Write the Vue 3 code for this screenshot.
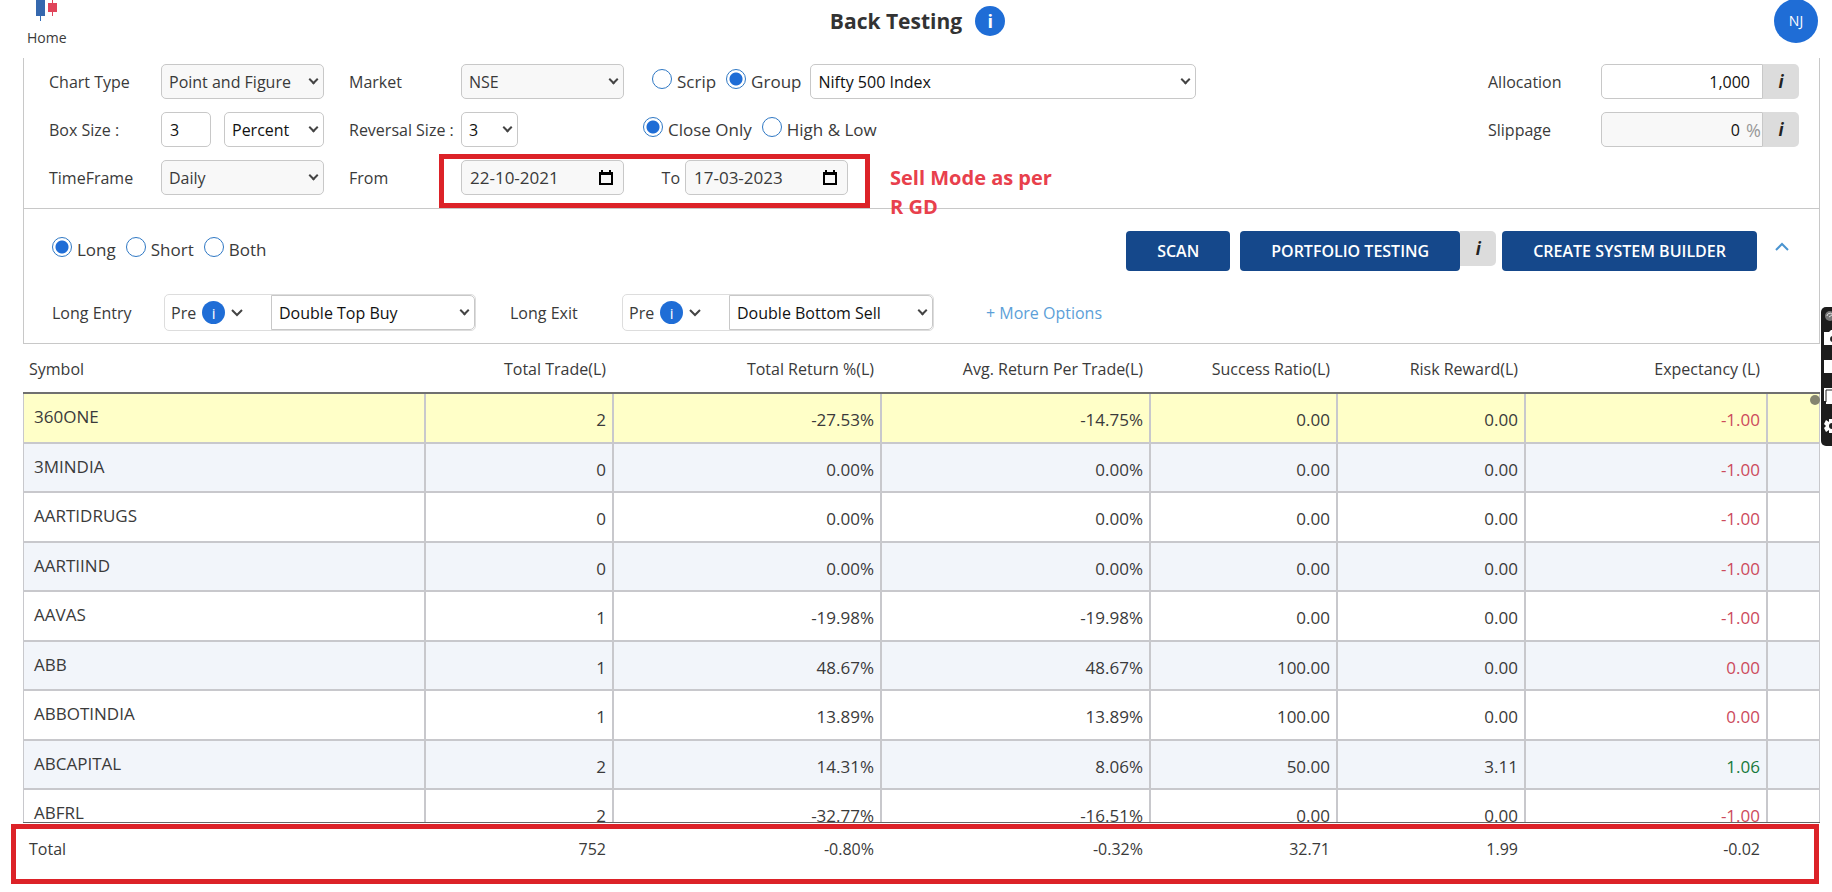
<script setup>
import { ref } from 'vue'

const chartType = ref('Point and Figure')
const market = ref('NSE')
const scope = ref('group')
const group = ref('Nifty 500 Index')
const boxSize = ref('3')
const boxUnit = ref('Percent')
const reversal = ref('3')
const priceMode = ref('close')
const timeFrame = ref('Daily')
const fromDate = ref('22-10-2021')
const toDate = ref('17-03-2023')
const allocation = ref('1,000')
const slippage = ref('0')
const side = ref('long')

const conditions = ref([
  { id: 'entry', label: 'Long Entry', value: 'Double Top Buy' },
  { id: 'exit', label: 'Long Exit', value: 'Double Bottom Sell' },
])

const headings = [
  'Symbol', 'Total Trade(L)', 'Total Return %(L)', 'Avg. Return Per Trade(L)',
  'Success Ratio(L)', 'Risk Reward(L)', 'Expectancy (L)',
]

const rows = [
  ['360ONE', '2', '-27.53%', '-14.75%', '0.00', '0.00', '-1.00'],
  ['3MINDIA', '0', '0.00%', '0.00%', '0.00', '0.00', '-1.00'],
  ['AARTIDRUGS', '0', '0.00%', '0.00%', '0.00', '0.00', '-1.00'],
  ['AARTIIND', '0', '0.00%', '0.00%', '0.00', '0.00', '-1.00'],
  ['AAVAS', '1', '-19.98%', '-19.98%', '0.00', '0.00', '-1.00'],
  ['ABB', '1', '48.67%', '48.67%', '100.00', '0.00', '0.00'],
  ['ABBOTINDIA', '1', '13.89%', '13.89%', '100.00', '0.00', '0.00'],
  ['ABCAPITAL', '2', '14.31%', '8.06%', '50.00', '3.11', '1.06'],
  ['ABFRL', '2', '-32.77%', '-16.51%', '0.00', '0.00', '-1.00'],
]

const totals = ['Total', '752', '-0.80%', '-0.32%', '32.71', '1.99', '-0.02']

function tone(value, column) {
  if (column !== 6) return ''
  return parseFloat(value) > 0 ? 'gain' : 'loss'
}
</script>

<template>
  <div class="page">
    <header class="top">
      <a class="home" href="#">
        <svg width="21" height="22" viewBox="0 0 21 22" aria-hidden="true">
          <path d="M4.5 0V21" stroke="#2f6cb8" stroke-width="1" />
          <rect x="0" y="0" width="9" height="16" fill="#3568ae" />
          <path d="M16.500 0V16" stroke="#e0445a" stroke-width="1" />
          <rect x="12" y="3" width="9" height="9" fill="#e0445a" />
        </svg>
        <span>Home</span>
      </a>
      <h1>Back Testing <button class="dot big" type="button" aria-label="About back testing">i</button></h1>
      <button class="avatar" type="button">NJ</button>
    </header>

    <section class="panel">
      <div class="settings">
        <div class="line">
          <label class="name" for="chart">Chart Type</label>
          <div class="pick muted w163"><select id="chart" v-model="chartType"><option>Point and Figure</option></select></div>
          <label class="name second" for="market">Market</label>
          <div class="pick muted w163"><select id="market" v-model="market"><option>NSE</option></select></div>
          <div class="radios scope">
            <label><input v-model="scope" type="radio" name="scope" value="scrip">Scrip</label>
            <label><input v-model="scope" type="radio" name="scope" value="group">Group</label>
          </div>
          <div class="pick wide"><select v-model="group" aria-label="Group"><option>Nifty 500 Index</option></select></div>
          <div class="money">
            <label for="alloc">Allocation</label>
            <input id="alloc" v-model="allocation" class="box" type="text">
            <button class="info" type="button" aria-label="About allocation">i</button>
          </div>
        </div>

        <div class="line">
          <label class="name" for="size">Box Size :</label>
          <input id="size" v-model="boxSize" class="box small" type="text">
          <div class="pick unit"><select v-model="boxUnit" aria-label="Box unit"><option>Percent</option></select></div>
          <label class="name second" for="reversal">Reversal Size :</label>
          <div class="pick rev"><select id="reversal" v-model="reversal"><option>3</option></select></div>
          <div class="radios price">
            <label><input v-model="priceMode" type="radio" name="price" value="close">Close Only</label>
            <label><input v-model="priceMode" type="radio" name="price" value="range">High &amp; Low</label>
          </div>
          <div class="money">
            <label for="slip">Slippage</label>
            <div class="slip">
              <input id="slip" v-model="slippage" class="box" type="text">
              <span>%</span>
            </div>
            <button class="info" type="button" aria-label="About slippage">i</button>
          </div>
        </div>

        <div class="line">
          <label class="name" for="frame">TimeFrame</label>
          <div class="pick muted w163"><select id="frame" v-model="timeFrame"><option>Daily</option></select></div>
          <label class="name second" for="from">From</label>
          <div class="dates">
            <div class="date">
              <input id="from" v-model="fromDate" type="text">
              <svg width="14" height="16" viewBox="0 0 14 16" aria-hidden="true"><path d="M3 0V3M11 0V3" stroke="#000" stroke-width="2" /><path d="M0 2H14V5H0Z" /><path d="M1 4V14H13V4" fill="none" stroke="#000" stroke-width="2" /></svg>
            </div>
            <label for="to">To</label>
            <div class="date">
              <input id="to" v-model="toDate" type="text">
              <svg width="14" height="16" viewBox="0 0 14 16" aria-hidden="true"><path d="M3 0V3M11 0V3" stroke="#000" stroke-width="2" /><path d="M0 2H14V5H0Z" /><path d="M1 4V14H13V4" fill="none" stroke="#000" stroke-width="2" /></svg>
            </div>
            <div class="mark"></div>
            <p class="note">Sell Mode as per R GD</p>
          </div>
        </div>
      </div>

      <div class="actions">
        <div class="radios">
          <label><input v-model="side" type="radio" name="side" value="long">Long</label>
          <label><input v-model="side" type="radio" name="side" value="short">Short</label>
          <label><input v-model="side" type="radio" name="side" value="both">Both</label>
        </div>
        <div class="buttons">
          <button class="primary" type="button">SCAN</button>
          <div class="joined">
            <button class="primary" type="button">PORTFOLIO TESTING</button>
            <button class="info" type="button" aria-label="About portfolio testing">i</button>
          </div>
          <button class="primary" type="button">CREATE SYSTEM BUILDER</button>
          <button class="fold" type="button" aria-label="Collapse">
            <svg width="14" height="9" viewBox="0 0 14 9" aria-hidden="true"><path d="M1 8L7 2L13 8" fill="none" stroke="#4a94d0" stroke-width="2" /></svg>
          </button>
        </div>
      </div>

      <div class="conditions">
        <div v-for="c in conditions" :key="c.id" class="condition">
          <label :for="c.id">{{ c.label }}</label>
          <div class="pair">
            <button class="pre" type="button">
              Pre <span class="dot">i</span>
              <svg width="12" height="8" viewBox="0 0 12 8" aria-hidden="true"><path d="M1 1L6 6L11 1" fill="none" stroke="#444" stroke-width="2" /></svg>
            </button>
            <div class="pick rule"><select :id="c.id" v-model="c.value"><option>{{ c.value }}</option></select></div>
          </div>
        </div>
        <a class="more" href="#">+ More Options</a>
      </div>
    </section>

    <section class="results">
      <div class="scroll">
        <table>
          <colgroup>
            <col><col class="c188"><col class="c268"><col class="c269"><col class="c187"><col class="c188"><col class="c242"><col class="c52">
          </colgroup>
          <thead>
            <tr><th v-for="h in headings" :key="h" scope="col">{{ h }}</th><td></td></tr>
          </thead>
          <tbody>
            <tr v-for="r in rows" :key="r[0]">
              <td v-for="(v, i) in r" :key="i" :class="tone(v, i)">{{ v }}</td>
              <td></td>
            </tr>
          </tbody>
          <tfoot>
            <tr><td v-for="(t, i) in totals" :key="i">{{ t }}</td><td></td></tr>
          </tfoot>
        </table>
      </div>
      <span class="thumb"></span>
      <div class="mark total"></div>
    </section>

    <aside class="dock">
      <svg width="11" height="139" viewBox="0 0 11 139" aria-hidden="true">
        <circle cx="9" cy="9" r="5" fill="#777" /><path d="M6 9a3 3 0 0 1 5-2M8 10L11 8" fill="none" stroke="#ddd" />
        <path d="M3 25H8L10 23H11V38H3Z" fill="#fff" /><circle cx="12" cy="32" r="3" fill="#222" />
        <path d="M3 53H11V66H3Z" fill="#fff" />
        <path d="M3 81H11V97H5V94H3Z" fill="#fff" /><path d="M5 95V83H11" fill="none" stroke="#222" />
        <path d="M11 112H8V115L5 113L3 117L5 119L3 121L5 125L8 123V126H11Z" fill="#fff" /><circle cx="11" cy="119" r="3" fill="#222" />
      </svg>
    </aside>
  </div>
</template>

<style>
body {
  margin: 0;
}
</style>

<style scoped>
.page {
  position: relative;
  display: flex;
  flex-direction: column;
  height: 100vh;
  overflow: hidden;
  background: #fff;
  color: #3a3a3a;
  font: 16px/24px "Open Sans", "Noto Sans", sans-serif;
}
.page *, .page *::before { box-sizing: border-box; }
button, input, select { font: inherit; color: inherit; margin: 0; }
button { border: 0; padding: 0; cursor: pointer; background: none; }
a { text-decoration: none; }

.top {
  flex: none;
  display: grid;
  grid-template-columns: 1fr auto 1fr;
  align-items: start;
  height: 58px;
  padding: 0 24px 0 27px;
}
.home {
  justify-self: start;
  display: flex;
  flex-direction: column;
  align-items: center;
  gap: 6px;
  color: #3a3a3a;
  font-size: 14px;
  line-height: 20px;
}
h1 {
  display: flex;
  align-items: center;
  gap: 13px;
  margin: 6px 0 0;
  font-size: 21px;
  line-height: 30px;
  font-weight: 700;
  color: #333;
}
.dot {
  display: inline-flex;
  align-items: center;
  justify-content: center;
  width: 23px;
  height: 23px;
  border-radius: 50%;
  background: #1f6dd6;
  color: #fff;
  font-size: 15px;
  line-height: 20px;
}
.dot.big {
  width: 30px;
  height: 30px;
  font-size: 18px;
  font-weight: 700;
}
.avatar {
  justify-self: end;
  width: 44px;
  height: 44px;
  margin: -1px -10px 0 0;
  border-radius: 50%;
  background: #1f6dd6;
  color: #fff;
  font-size: 14px;
}

.panel {
  flex: none;
  margin: 0 12px 0 23px;
  border: 1px solid #c8c8c8;
  border-top: 0;
}
.settings {
  display: flex;
  flex-direction: column;
  gap: 13px;
  padding: 6px 20px 13px 25px;
  border-bottom: 1px solid #c8c8c8;
}
.line { display: flex; align-items: center; height: 35px; }
.name { width: 112px; flex: none; white-space: nowrap; }
.second { margin-left: 25px; }
.box, .pick, .date {
  height: 35px;
  border: 1px solid #c8c8c8;
  border-radius: 5px;
  background: #fff;
  color: #111;
}
.box { padding: 0 8px; }
.small { width: 50px; }
.pick { position: relative; flex: none; }
.pick::after {
  content: "";
  position: absolute;
  right: 6px;
  top: 11px;
  width: 5px;
  height: 5px;
  border: solid #444;
  border-width: 0 2px 2px 0;
  transform: rotate(45deg);
  pointer-events: none;
}
.pick select {
  appearance: none;
  width: 100%;
  height: 100%;
  padding: 0 18px 0 7px;
  border: 0;
  background: none;
}
.muted, .date { background: #f8f8f8; color: #3a3a3a; }
.w163 { width: 163px; }
.unit { width: 100px; margin-left: 13px; }
.rev { width: 57px; }
.wide { width: 386px; margin-left: 9px; }
.radios { display: flex; gap: 10px; font-size: 17px; }
.radios label { display: flex; align-items: center; gap: 5px; white-space: nowrap; }
.radios input {
  appearance: none;
  width: 20px;
  height: 20px;
  margin-bottom: 5px;
  border: 1px solid #2f78c4;
  border-radius: 50%;
  background: #fff;
}
.radios input:checked { background: radial-gradient(circle, #1f6dd6 6px, #fff 7px); }
.scope { margin-left: 28px; }
.price { margin-left: 125px; }
.money { display: flex; margin-left: auto; align-items: center; }
.money label { width: 113px; }
.money .box {
  width: 162px;
  padding: 0 12px;
  border-radius: 5px 0 0 5px;
  text-align: right;
}
.slip { position: relative; display: flex; }
.slip .box { padding-right: 22px; background: #f8f8f8; }
.slip span { position: absolute; right: 2px; top: 6px; color: #999; font-size: 18px; }
.info {
  width: 36px;
  height: 35px;
  border-radius: 0 5px 5px 0;
  background: #dcdcdc;
  color: #222;
  font: italic 700 17px/24px "Open Sans", "Noto Sans", sans-serif;
}
.dates { position: relative; display: flex; align-items: center; }
.dates label { width: 61px; padding-right: 5px; text-align: right; }
.date { display: flex; align-items: center; width: 163px; padding: 0 10px 0 8px; font-size: 17px; }
.date input { flex: 1; min-width: 0; padding: 0; border: 0; outline: 0; background: none; }
.mark { position: absolute; inset: -6px -22px -13px -22px; border: 5px solid #dc2228; }
.note {
  position: absolute;
  left: calc(100% + 42px);
  top: 3px;
  width: 180px;
  margin: 0;
  color: #e8404c;
  font: 700 20px/29px "Open Sans", "Noto Sans", sans-serif;
}

.actions {
  display: flex;
  justify-content: space-between;
  align-items: flex-start;
  padding: 22px 30px 0 28px;
}
.actions .radios { margin-top: 6px; }
.buttons { display: flex; gap: 10px; align-items: flex-start; }
.primary {
  height: 40px;
  padding: 0 31px;
  border-radius: 4px;
  background: #15488b;
  color: #fff;
  font-size: 16px;
  font-weight: 600;
  white-space: nowrap;
}
.joined { display: flex; margin-right: -4px; }
.fold { width: 14px; margin: 2px 0 0 8px; }
.conditions { display: flex; align-items: center; padding: 23px 28px 12px; }
.condition { display: flex; align-items: center; margin-right: 34px; }
.condition label { width: 112px; }
.pair {
  display: flex;
  border: 1px solid #ddd;
  border-radius: 5px;
}
.pre { display: flex; align-items: center; gap: 6px; width: 106px; padding-left: 6px; }
.rule { width: 204px; border-radius: 0 5px 5px 0; }
.more { margin-left: 18px; color: #5c9fd8; }

.results {
  position: relative;
  flex: 1;
  min-height: 0;
  margin: 0 12px 0 23px;
}
.scroll { height: 100%; overflow: auto; scrollbar-width: none; }
table { width: 100%; border-collapse: separate; border-spacing: 0; table-layout: fixed; }
.c52 { width: 52px; }
.c187 { width: 187px; }
.c188 { width: 188px; }
.c242 { width: 242px; }
.c268 { width: 268px; }
.c269 { width: 269px; }
th, td { text-align: right; font-weight: 400; padding: 0 8px 0 6px; }
th:first-child, td:first-child { text-align: left; }
thead th, thead td {
  position: sticky;
  top: 0;
  height: 50px;
  padding-top: 2px;
  background: #fff;
  border-bottom: 2px solid #707070;
}
tbody td {
  height: 49px;
  padding: 4px 6px 0 10px;
  border-right: 2px solid #c8c8cc;
  border-bottom: 2px solid #c8c8cc;
  font-size: 17px;
}
tbody td:first-child { padding: 0 10px 2px; border-left: 1px solid #c8c8cc; }
tbody td:last-child { border-right-width: 1px; }
tbody tr:nth-child(odd) td { height: 50px; }
tbody tr:nth-child(even) { background: #f2f5fa; }
tbody tr:first-child { background: #ffffc8; }
.loss { color: #cc4a5c; }
.gain { color: #17793a; }
tfoot td {
  position: sticky;
  bottom: 0;
  height: 70px;
  padding-bottom: 18px;
  background: #fff;
  border-top: 1px solid #666;
}
.total { inset: auto 1px 8px -12px; height: 60px; pointer-events: none; }
.thumb {
  position: absolute;
  top: 51px;
  right: 0;
  width: 10px;
  height: 10px;
  border-radius: 50%;
  background: #85856f;
}
.dock {
  position: absolute;
  top: 307px;
  right: 0;
  width: 11px;
  height: 139px;
  overflow: hidden;
  border-radius: 5px 0 0 5px;
  background: #1c1c1c;
}
.dock svg { display: block; }
</style>
